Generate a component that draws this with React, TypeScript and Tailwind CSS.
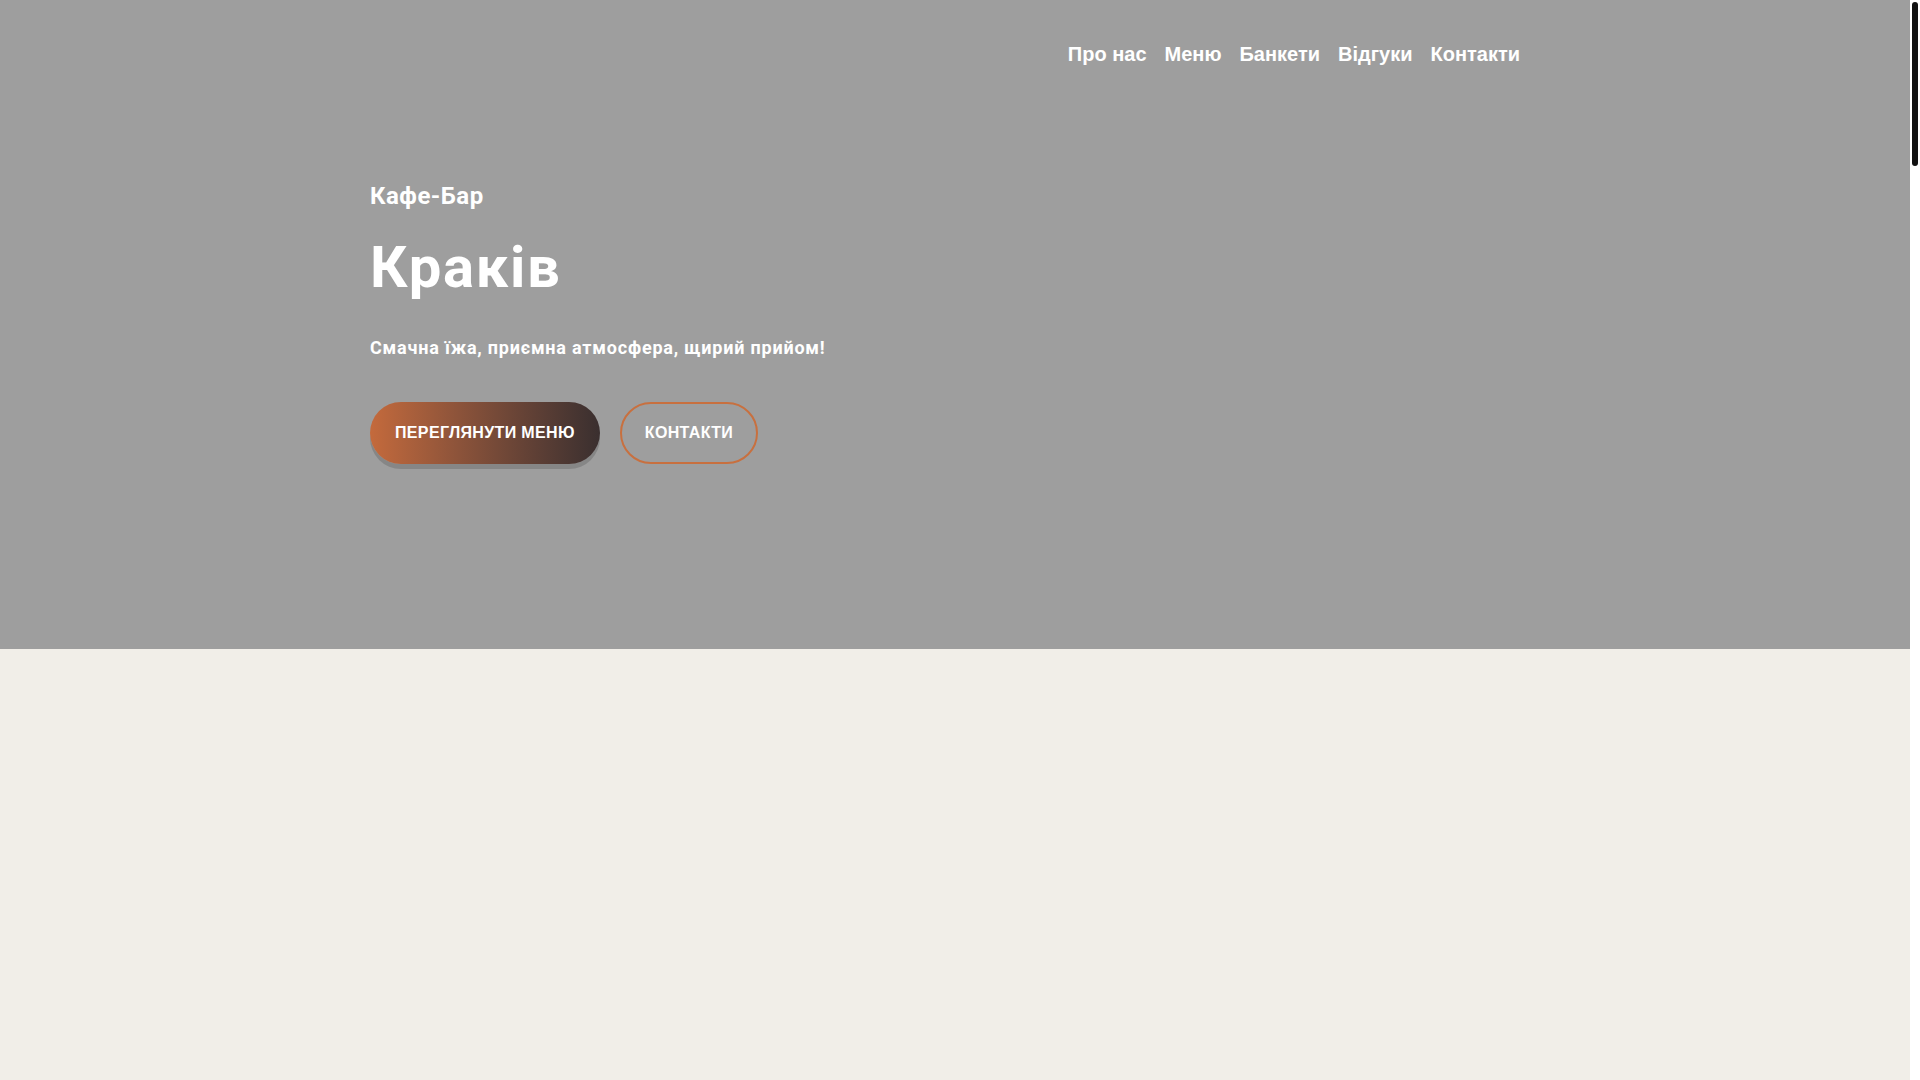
const navLinks = ["Про нас", "Меню", "Банкети", "Відгуки", "Контакти"];

export default function App() {
  return (
    <div className="flex h-screen bg-white">
      <div className="flex-1 overflow-y-auto bg-[#f1eee8] [scrollbar-width:none]">
        <section className="h-[649px] bg-[#9e9e9e]">
          <div className="mx-auto w-[1170px]">
            <header className="flex justify-end pt-[40px] pr-[20px]">
              <nav className="flex gap-[18px] font-['Liberation_Sans',Arial,sans-serif] text-[20px] font-bold leading-[28px] text-white">
                {navLinks.map((link) => (
                  <a key={link} href="#" className="hover:text-[#c46a3c]">
                    {link}
                  </a>
                ))}
              </nav>
            </header>

            <div className="font-['Roboto',sans-serif] text-white">
              <p className="mt-[114px] text-[24px] font-bold leading-[1.2] tracking-[0.5px]">Кафе-Бар</p>
              <h1 className="mt-[25px] text-[58px] font-bold leading-[1.1] tracking-[1.6px]">Краків</h1>
              <p className="mt-[34px] text-[18px] font-bold leading-[1.5] tracking-[0.8px]">
                Смачна їжа, приємна атмосфера, щирий прийом!
              </p>
            </div>

            <div className="mt-[41px] flex gap-[20px] font-['Liberation_Sans',Arial,sans-serif] text-[16px] font-bold uppercase tracking-[0.35px] text-white">
              <a
                href="#"
                className="flex h-[62px] items-center rounded-full bg-gradient-to-r from-[#c46a3c] to-[#3a2f2f] px-[25px] shadow-[0_5px_0_rgba(0,0,0,0.15)]"
              >
                Переглянути меню
              </a>
              <a
                href="#"
                className="flex h-[62px] items-center rounded-full border-2 border-[#c8703f] px-[23px]"
              >
                Контакти
              </a>
            </div>
          </div>
        </section>

        <main className="h-[6400px]" />
      </div>

      {/* page scrollbar */}
      <div className="w-[10px] bg-white px-[2px] pt-[2px]">
        <div className="h-[164px] rounded-full bg-[#111111]" />
      </div>
    </div>
  );
}
